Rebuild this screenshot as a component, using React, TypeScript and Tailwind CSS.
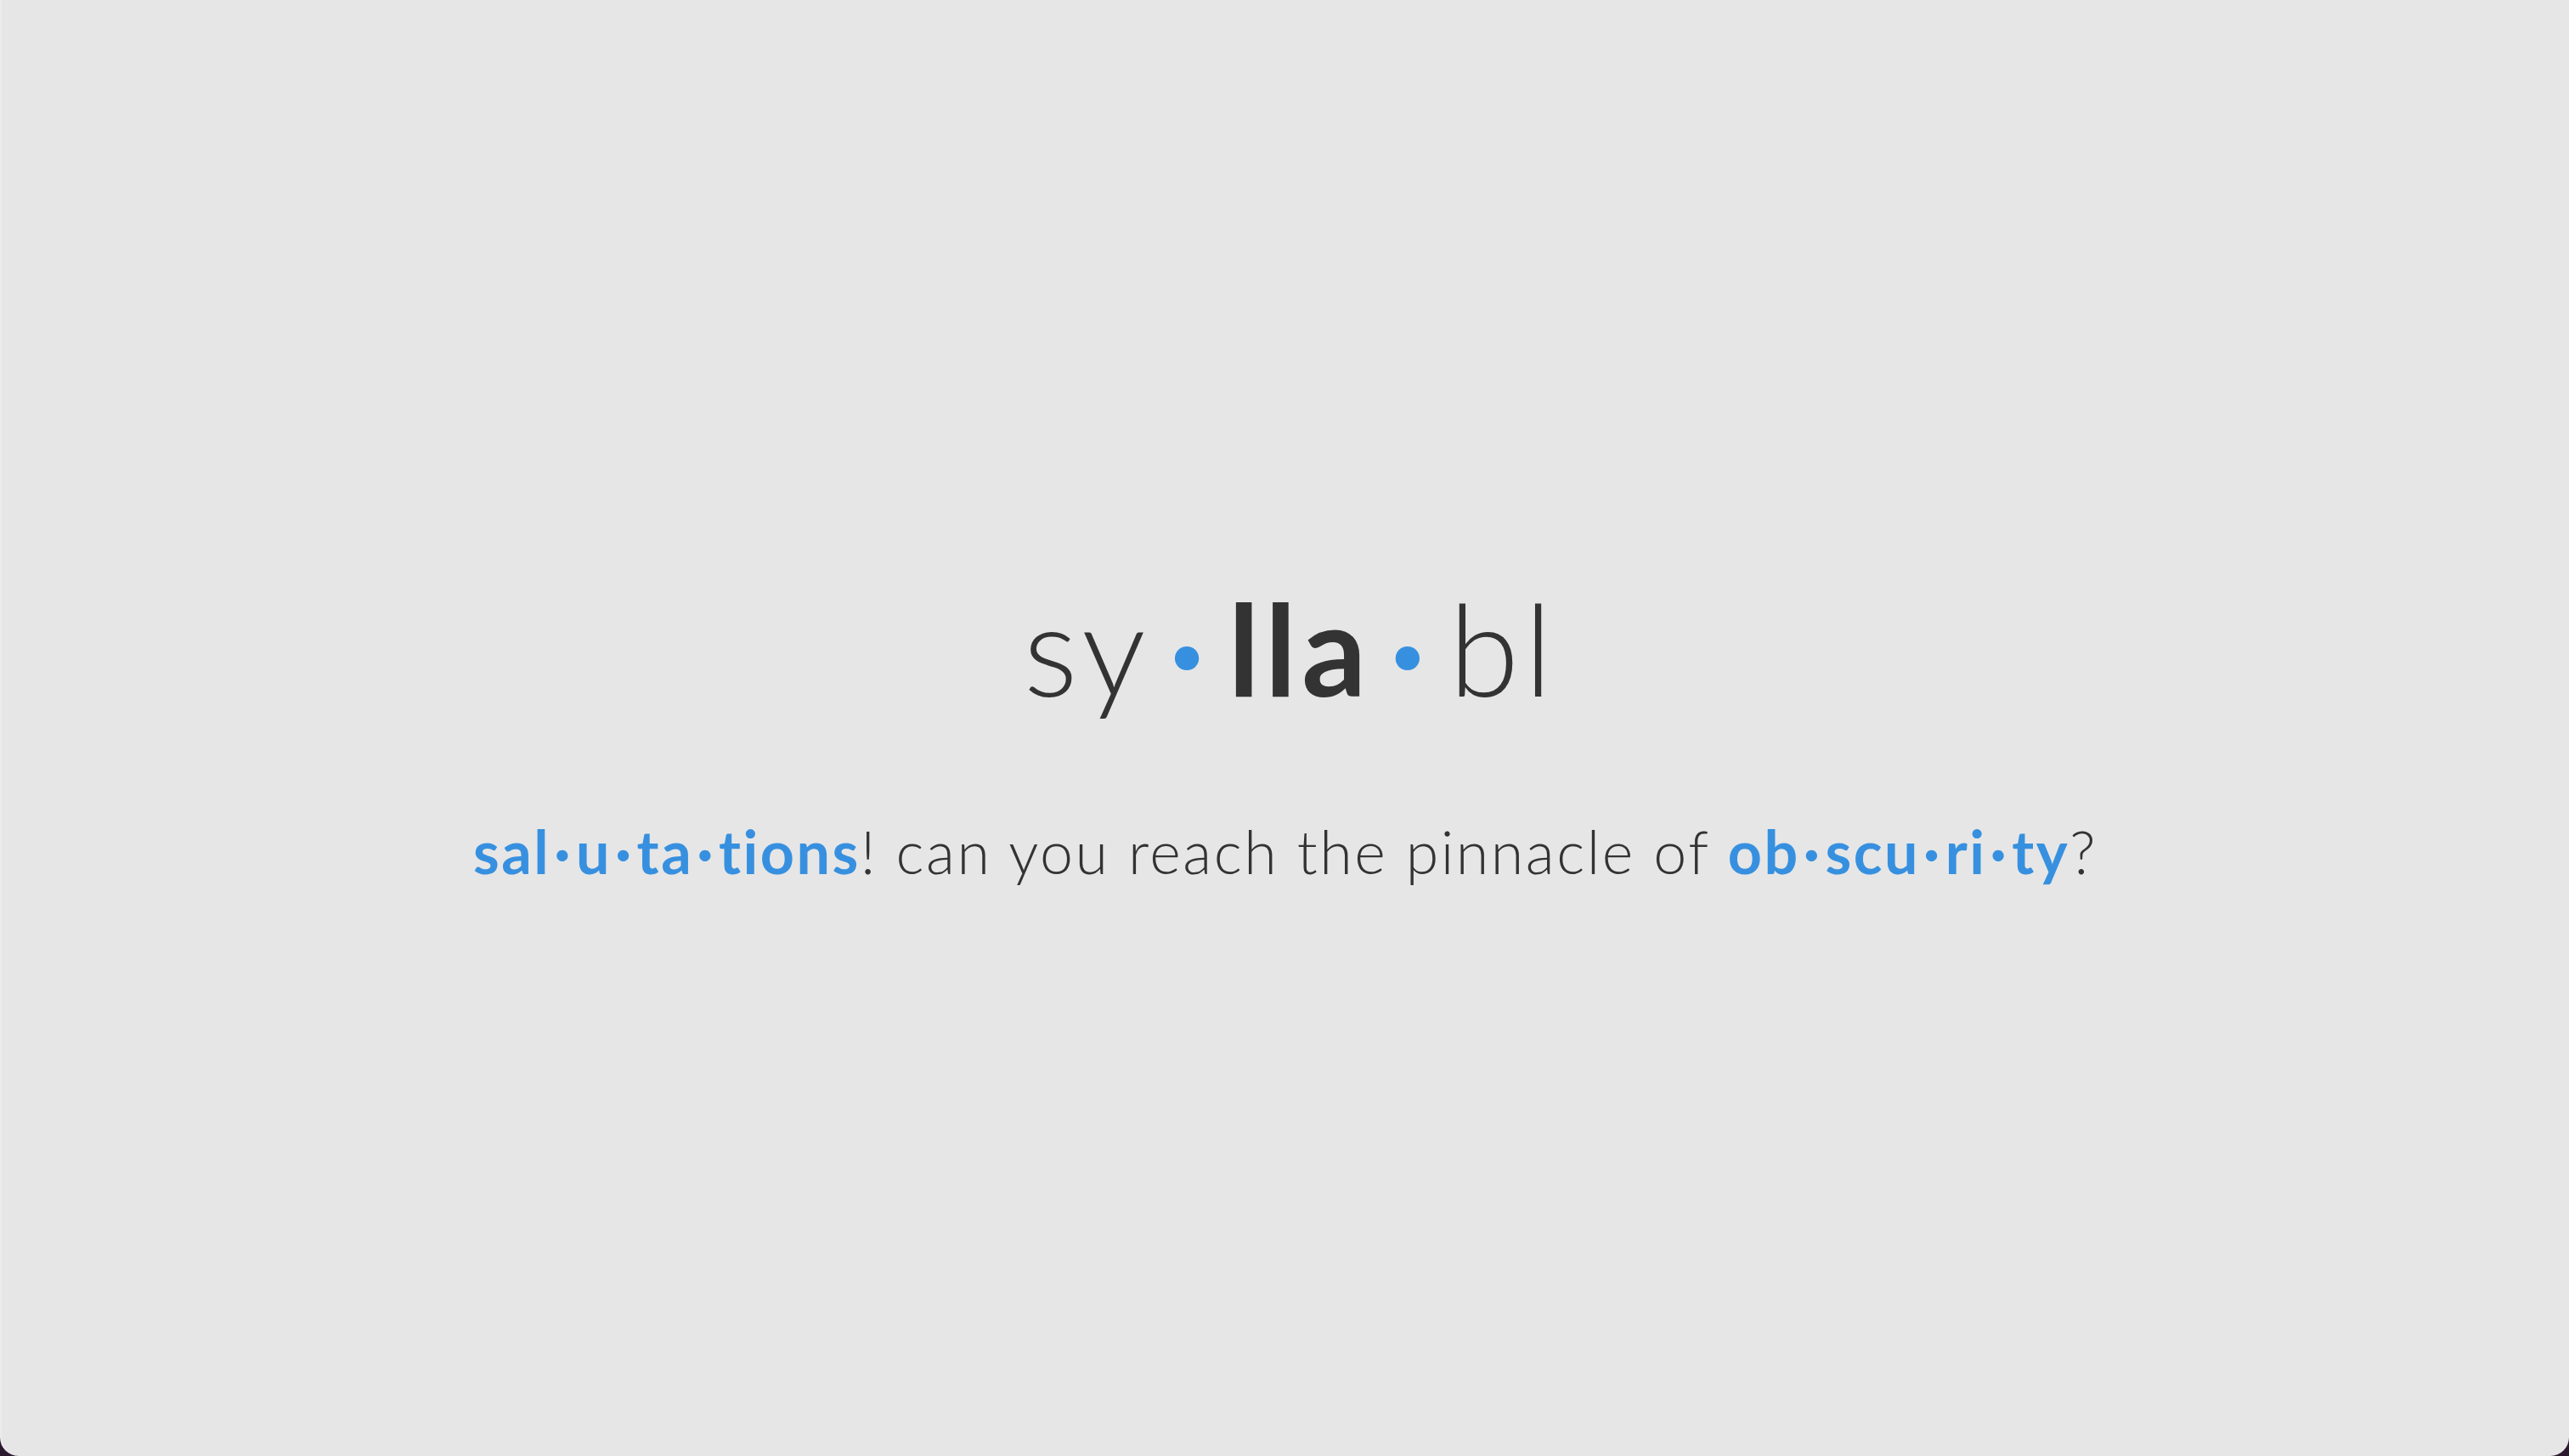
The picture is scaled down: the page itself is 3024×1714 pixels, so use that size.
import React from "react";

const Dot = ({ cls }: { cls: string }) => (
  <span className={"text-[#3790df] font-bold " + cls}>·</span>
);

export default function App() {
  return (
    <div className="w-full h-[1714px] bg-[#2b1a2e]">
      <div
        className="w-full h-full bg-[#e6e6e6] rounded-b-[22px] border-l-2 border-[#ececec] flex flex-col items-center justify-center pb-[4px]"
        style={{ fontFamily: "Lato, 'Open Sans', sans-serif" }}
      >
        <div className="text-[150px] leading-none text-[#333333] font-light tracking-[6px] mt-[14px] ml-[12px]">
          <span>sy</span>
          <Dot cls="mx-[22px]" />
          <span className="font-bold">lla</span>
          <Dot cls="mx-[22px]" />
          <span>bl</span>
        </div>
        <div className="mt-[130px] text-[70px] leading-none text-[#333333] font-light tracking-[2.5px]">
          <span className="text-[#3790df] font-bold">
            sal<Dot cls="mx-[4px]" />u<Dot cls="mx-[4px]" />ta<Dot cls="mx-[4px]" />tions
          </span>
          <span>! can you reach the pinnacle of </span>
          <span className="text-[#3790df] font-bold">
            ob<Dot cls="mx-[4px]" />scu<Dot cls="mx-[4px]" />ri<Dot cls="mx-[4px]" />ty
          </span>
          <span>?</span>
        </div>
      </div>
    </div>
  );
}
